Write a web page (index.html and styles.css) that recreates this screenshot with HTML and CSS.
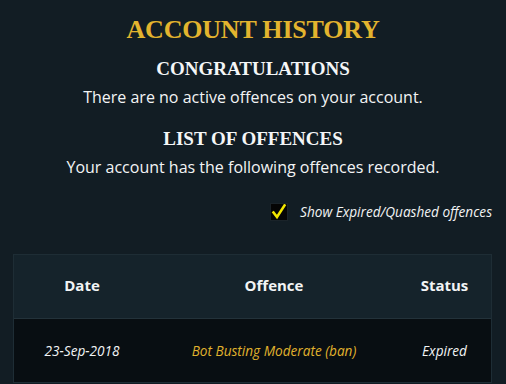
FILE: index.html
```html
<!DOCTYPE html>
<html>
<head>
<meta charset="utf-8">
<link rel="stylesheet" href="styles.css">
</head>
<body>
<div class="page">
  <h1 class="title">Account History</h1>
  <h2 class="subtitle">Congratulations</h2>
  <p class="text">There are no active offences on your account.</p>
  <h2 class="subtitle second">List of Offences</h2>
  <p class="text">Your account has the following offences recorded.</p>
  <div class="filter">
    <span class="checkbox">
      <svg width="16" height="16" viewBox="0 0 16 16"><path d="M2.5 8.5 L6 13 L13.5 1.5" fill="none" stroke="#f2e600" stroke-width="2.6" stroke-linecap="square"/></svg>
    </span>
    <span class="filter-label">Show Expired/Quashed offences</span>
  </div>
  <div class="table">
    <div class="row head">
      <div class="c1">Date</div>
      <div class="c2">Offence</div>
      <div class="c3">Status</div>
    </div>
    <div class="row body">
      <div class="c1">23-Sep-2018</div>
      <div class="c2 gold">Bot Busting Moderate (ban)</div>
      <div class="c3">Expired</div>
    </div>
  </div>
</div>
</body>
</html>
```

FILE: styles.css
```css
html, body {
  margin: 0;
  padding: 0;
  background: #121d24;
}
.page {
  width: 506px;
  height: 384px;
  overflow: hidden;
  display: flex;
  flex-direction: column;
  align-items: center;
  color: #f2f4f5;
  font-family: "Open Sans", sans-serif;
}
.title {
  margin: 14px 0 0;
  font-family: "Liberation Serif", serif;
  font-weight: bold;
  font-size: 26px;
  line-height: 32px;
  letter-spacing: -0.2px;
  text-transform: uppercase;
  color: #e3b42e;
}
.subtitle {
  margin: 12px 0 0;
  font-family: "Liberation Serif", serif;
  font-weight: bold;
  font-size: 19px;
  line-height: 22px;
  text-transform: uppercase;
  color: #f4f6f7;
}
.subtitle.second {
  margin-top: 20px;
}
.text {
  margin: 6px 0 0;
  font-size: 16px;
  line-height: 22px;
}
.filter {
  align-self: flex-end;
  margin: 24px 14px 0 0;
  display: flex;
  align-items: center;
  gap: 12px;
}
.checkbox {
  width: 16px;
  height: 16px;
  background: #050505;
  display: flex;
  border: 1px solid #1a2329;
}
.filter-label {
  font-style: italic;
  font-size: 13.6px;
}
.table {
  align-self: stretch;
  margin: 33px 14px 0 13px;
  border: 1px solid #1e2d35;
  background: #15232b;
}
.row {
  display: grid;
  grid-template-columns: 136px 248px 1fr;
  text-align: center;
}
.head {
  height: 64px;
  align-items: center;
  font-weight: bold;
  font-size: 15px;
  padding-bottom: 4px;
  box-sizing: border-box;
  border-bottom: 1px solid #23323a;
}
.body {
  height: 63px;
  align-items: center;
  background: #080e12;
  font-style: italic;
  font-size: 13.6px;
}
.gold {
  color: #e0b22d;
}
```
